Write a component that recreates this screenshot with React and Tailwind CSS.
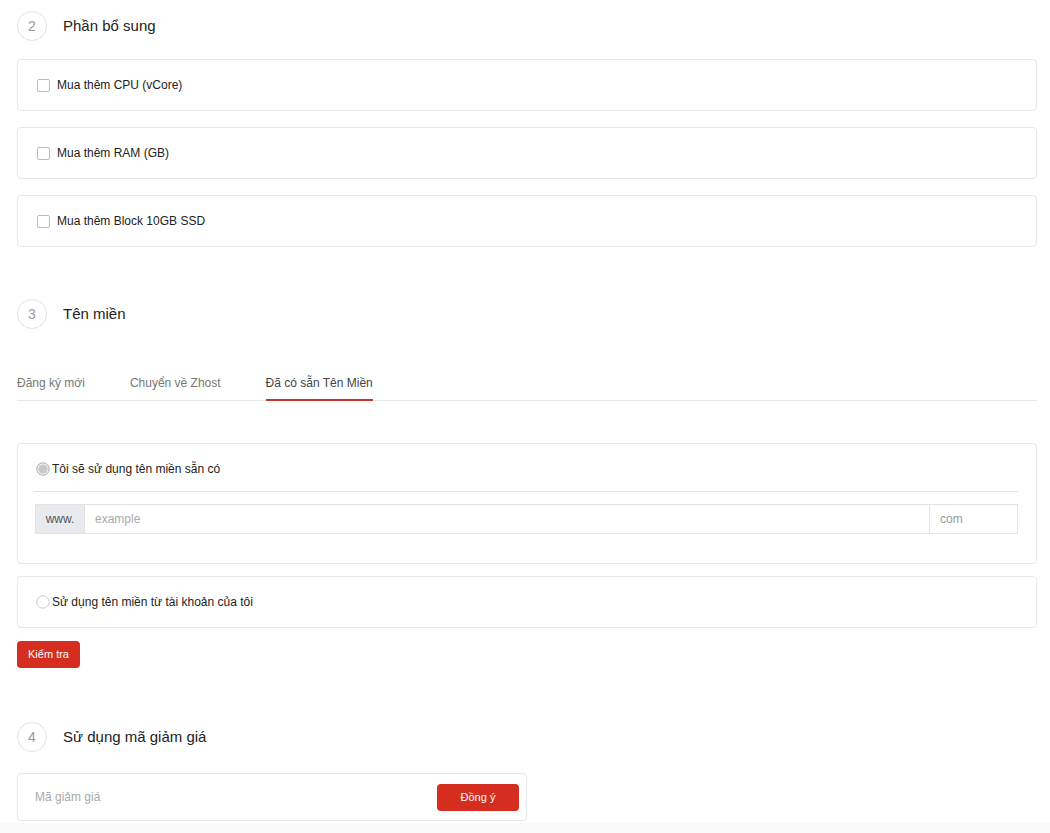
import React from "react";

const font = { fontFamily: '"Liberation Sans", Arial, sans-serif' };

function StepHeader({ n, title }) {
  return (
    <div className="flex items-center h-[30px]">
      <div className="w-[30px] h-[30px] rounded-full border border-[#e2e2e2] flex items-center justify-center text-[14px] text-[#999]">
        {n}
      </div>
      <div className="ml-4 text-[15px] text-[#222]">{title}</div>
    </div>
  );
}

function CheckCard({ label }) {
  return (
    <div className="h-[52px] border border-[#e8e8e8] rounded-[4px] flex items-center pl-[19px]">
      <span className="w-[13px] h-[13px] border border-[#bdbdbd] rounded-[2px] bg-white" />
      <span className="ml-[7px] text-[12px] text-[#222]">{label}</span>
    </div>
  );
}

function Radio({ checked }) {
  return (
    <svg width="14" height="14" viewBox="0 0 14 14" className="shrink-0">
      {checked ? (
        <>
          <circle cx="7" cy="7" r="6.2" fill="#f2f2f2" stroke="#a9a9a9" strokeWidth="1" />
          <circle cx="7" cy="7" r="4.6" fill="#c9c9c9" />
        </>
      ) : (
        <circle cx="7" cy="7" r="6.2" fill="#fff" stroke="#c8c8c8" strokeWidth="1" />
      )}
    </svg>
  );
}

export default function App() {
  return (
    <div className="min-h-screen bg-[#fafafa]" style={font}>
      <div className="bg-white pl-[17px] pr-[13px] pt-[11px] pb-[2px]">
        <StepHeader n="2" title="Phần bổ sung" />
        <div className="mt-[18px] flex flex-col gap-4">
          <CheckCard label="Mua thêm CPU (vCore)" />
          <CheckCard label="Mua thêm RAM (GB)" />
          <CheckCard label="Mua thêm Block 10GB SSD" />
        </div>

        <div className="mt-[52px]">
          <StepHeader n="3" title="Tên miền" />
        </div>

        <div className="mt-[46px] flex border-b border-[#e8e8e8] text-[12px] leading-[16px]">
          <div className="pb-[8px] border-b-2 border-transparent -mb-px text-[#777] mr-[45px]">Đăng ký mới</div>
          <div className="pb-[8px] border-b-2 border-transparent -mb-px text-[#777] mr-[45px]">Chuyển về Zhost</div>
          <div className="pb-[8px] border-b-2 border-[#c6372b] -mb-px text-[#444]">Đã có sẵn Tên Miền</div>
        </div>

        <div className="mt-[42px] border border-[#e8e8e8] rounded-[4px] pl-4 pr-[18px] pt-[15px] pb-[29px]">
          <div className="flex items-center h-[20px] pl-[2px]">
            <Radio checked />
            <span className="ml-[2px] text-[12px] text-[#222]">Tôi sẽ sử dụng tên miền sẵn có</span>
          </div>
          <div className="mt-[12px] h-px bg-[#e3e3e3]" />
          <div className="mt-[12px] ml-px flex h-[30px] border border-[#e3e3e3] text-[12px]">
            <div className="w-[49px] bg-[#e9eaee] text-[#555] flex items-center justify-center border-r border-[#e3e3e3]">
              www.
            </div>
            <div className="flex-1 flex items-center pl-[10px] text-[#aaa]">example</div>
            <div className="w-[88px] border-l border-[#e3e3e3] flex items-center pl-[10px] text-[#999]">com</div>
          </div>
        </div>

        <div className="mt-[12px] h-[52px] border border-[#e8e8e8] rounded-[4px] flex items-center pl-[18px]">
          <Radio />
          <span className="ml-[2px] text-[12px] text-[#222]">Sử dụng tên miền từ tài khoản của tôi</span>
        </div>

        <button className="mt-[13px] w-[63px] h-[27px] rounded-[4px] bg-[#d52d1f] text-white text-[11px] flex items-center justify-center">
          Kiểm tra
        </button>

        <div className="mt-[54px]">
          <StepHeader n="4" title="Sử dụng mã giảm giá" />
        </div>

        <div className="mt-[21px] w-[510px] h-[48px] border border-[#e8e8e8] rounded-[4px] flex items-center pl-[17px] pr-[7px]">
          <div className="flex-1 text-[12px] text-[#aaa]">Mã giảm giá</div>
          <button className="w-[82px] h-[27px] rounded-[4px] bg-[#d52d1f] text-white text-[11px] flex items-center justify-center">
            Đồng ý
          </button>
        </div>
      </div>
    </div>
  );
}
